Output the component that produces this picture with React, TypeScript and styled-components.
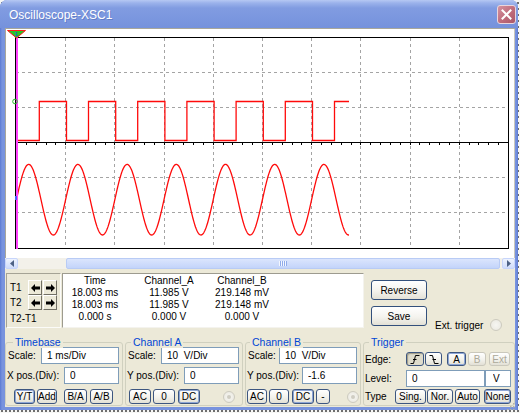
import React from "react";
import styled, { createGlobalStyle, css } from "styled-components";

const FONT = `"Liberation Sans", Arial, sans-serif`;

const Global = createGlobalStyle`
  html, body { margin: 0; padding: 0; }
  body {
    width: 520px; height: 413px; overflow: hidden;
    background-color: #f7f7f5;
    background-image: radial-gradient(circle, #6e6e6e 0.8px, transparent 1.1px);
    background-size: 4px 6px;
    font-family: ${FONT};
  }
`;

const Window = styled.div`
  position: relative;
  box-sizing: border-box;
  width: 518px;
  height: 410px;
  display: flex;
  flex-direction: column;
  background: linear-gradient(90deg, #5a79d2 0, #7893de 2px, #7893de calc(100% - 2px), #5a79d2 100%);
  border-radius: 7px 7px 0 0;
  overflow: hidden;
`;

const TitleBar = styled.div`
  height: 28px;
  flex-shrink: 0;
  display: flex;
  align-items: center;
  padding: 0 2px 0 9px;
  background: linear-gradient(180deg, #b6c8f3 0px, #9bb2eb 3px, #819ce1 8px, #7b97df 18px, #7592dc 28px);
`;

const Title = styled.span`
  flex: 1;
  color: #fff;
  font: 12px ${FONT};
  text-shadow: 1px 1px 0 rgba(40, 60, 140, 0.3);
  padding-top: 2px;
`;

const CloseBtn = styled.div`
  width: 19px;
  height: 19px;
  box-sizing: border-box;
  border: 1px solid #ead6dc;
  border-radius: 3px;
  background: linear-gradient(135deg, #d493a0, #bf6b7b 55%, #a95868);
  display: flex;
  align-items: center;
  justify-content: center;
  margin-top: 1px;
`;

const Body = styled.div`
  flex: 1;
  min-height: 0;
  margin: 0 3px 3px 5px;
  background: #ece9d8;
  display: flex;
  flex-direction: column;
`;

const ScopePanel = styled.div`
  height: 230px;
  flex-shrink: 0;
  background: #fff;
  box-shadow: inset 1px 1px 0 #a9a79b, inset -1px 0 0 #c9c7bc;
  svg { display: block; }
`;

const ScrollBar = styled.div`
  height: 11px;
  flex-shrink: 0;
  display: flex;
  background: #f3f1ea;
`;

const ScrollBtn = styled.div`
  width: 13px;
  box-sizing: border-box;
  border: 1px solid #c7d5fb;
  border-radius: 2px;
  background: linear-gradient(180deg, #eef3fe, #cfdcfb);
  display: flex;
  align-items: center;
  justify-content: center;
`;

const Track = styled.div`
  flex: 1;
  display: flex;
  padding: 0 2px 0 48px;
`;

const Thumb = styled.div`
  flex: 1;
  box-sizing: border-box;
  border: 1px solid #b8cbf5;
  border-radius: 2px;
  background: linear-gradient(180deg, #dbe5fd, #c3d4fa);
  display: flex;
  align-items: center;
  justify-content: center;
`;

const Grip = styled.div`
  width: 8px;
  height: 5px;
  background: repeating-linear-gradient(90deg, #f4f7ff 0 1px, #8fabea 1px 2px);
`;

const Controls = styled.div`
  flex: 1;
  display: flex;
  flex-direction: column;
`;

const MeasureRow = styled.div`
  display: flex;
  height: 55px;
  margin-top: 4px;
  padding-left: 1px;
`;

const CursorBox = styled.div`
  width: 55px;
  box-sizing: border-box;
  border: 1px solid;
  border-color: #a5a395 #fbfbf8 #fbfbf8 #a5a395;
  padding: 6px 0 0 3px;
  display: flex;
  flex-direction: column;
`;

const CursorRow = styled.div<{ $h: number }>`
  display: flex;
  align-items: center;
  height: ${(p) => p.$h}px;
`;

const CursorLabel = styled.span`
  width: 18px;
  font-size: 10px;
  color: #000;
  white-space: nowrap;
`;

const ArrowBtn = styled.div<{ $ml?: number }>`
  width: 14px;
  height: 15px;
  box-sizing: border-box;
  margin-left: ${(p) => p.$ml ?? 0}px;
  background: #ece9d8;
  border: 1px solid;
  border-color: #ffffff #716f64 #716f64 #ffffff;
  display: flex;
  align-items: center;
  justify-content: center;
`;

const DataBox = styled.div`
  width: 302px;
  margin-left: 1px;
  box-sizing: border-box;
  background: #fff;
  border: 1px solid;
  border-color: #9d9b8f #f4f3ee #f4f3ee #9d9b8f;
  padding-top: 1px;
  display: grid;
  grid-template-columns: 64px 84px 62px;
  grid-auto-rows: 12px;
  align-content: start;
`;

const Cell = styled.span`
  font-size: 10px;
  line-height: 12px;
  text-align: center;
  color: #000;
  white-space: nowrap;
`;

const ButtonCol = styled.div`
  width: 56px;
  margin-left: 7px;
  padding-top: 7px;
  display: flex;
  flex-direction: column;
  gap: 6px;
`;

const ActionBtn = styled.button`
  box-sizing: border-box;
  width: 56px;
  height: 20px;
  padding: 0;
  font: 10px ${FONT};
  color: #000;
  border: 1px solid #33507c;
  border-radius: 3px;
  background: linear-gradient(#ffffff, #f4f3ee 55%, #e3e1d6);
`;

const ExtTrigger = styled.div`
  margin-left: 8px;
  align-self: flex-end;
  margin-bottom: -3px;
  display: flex;
  align-items: center;
  gap: 7px;
  font-size: 10px;
  color: #000;
`;

const Radio = styled.span<{ $dot?: boolean; $ml?: number }>`
  box-sizing: border-box;
  width: 12px;
  height: 12px;
  flex-shrink: 0;
  border-radius: 50%;
  border: 1px solid #cdcbbf;
  background: radial-gradient(circle, #f6f6f2 0, #e9e7de 100%);
  margin-left: ${(p) => p.$ml ?? 0}px;
  display: flex;
  align-items: center;
  justify-content: center;
  &::after {
    content: "";
    width: 4px;
    height: 4px;
    border-radius: 50%;
    background: #cfcdc2;
    display: ${(p) => (p.$dot ? "block" : "none")};
  }
`;

const GroupsRow = styled.div`
  display: flex;
  gap: 2px;
  margin-top: 8px;
  height: 71px;
  align-items: flex-start;
`;

const Group = styled.div<{ $w?: number }>`
  position: relative;
  box-sizing: border-box;
  ${(p) => (p.$w ? css`width: ${p.$w}px;` : css`flex: 1;`)}
  height: 64px;
  margin-top: 6px;
  border: 1px solid #d0d0bf;
  border-radius: 3px;
  padding: 0 3px 0 0;
  display: flex;
  flex-direction: column;
`;

const GroupTitle = styled.span<{ $l: number }>`
  position: absolute;
  top: -7px;
  left: ${(p) => p.$l}px;
  padding: 0 2px;
  background: #ece9d8;
  color: #0046d5;
  font-size: 10.5px;
  line-height: 12px;
`;

const Row = styled.div<{ $h: number; $mt: number }>`
  display: flex;
  align-items: center;
  height: ${(p) => p.$h}px;
  margin-top: ${(p) => p.$mt}px;
`;

const Label = styled.span<{ $ml?: number; $w?: number }>`
  margin-left: ${(p) => p.$ml ?? 2}px;
  ${(p) => (p.$w ? css`width: ${p.$w}px;` : "")}
  flex-shrink: 0;
  font-size: 10px;
  color: #000;
  white-space: nowrap;
`;

const Field = styled.input<{ $w: number; $auto?: boolean; $pl?: number }>`
  box-sizing: border-box;
  width: ${(p) => p.$w}px;
  height: 17px;
  margin: 0 0 0 ${(p) => (p.$auto ? "auto" : "0")};
  padding: 0 0 0 ${(p) => p.$pl ?? 5}px;
  border: 1px solid #7f9db9;
  background: #fff;
  font: 10px ${FONT};
  color: #000;
  outline: none;
  white-space: pre;
`;

const GBtn = styled.button<{ $w: number; $ml?: number; $sel?: boolean; $dis?: boolean; $pressed?: boolean }>`
  box-sizing: border-box;
  width: ${(p) => p.$w}px;
  height: 100%;
  margin: 0 0 0 ${(p) => p.$ml ?? 0}px;
  padding: 0;
  flex-shrink: 0;
  font: 10px ${FONT};
  color: ${(p) => (p.$dis ? "#aca899" : "#000")};
  border: 1px solid ${(p) => (p.$dis ? "#cac8bc" : "#3d5680")};
  border-radius: 3px;
  background: linear-gradient(#ffffff, #f3f2ec 55%, #e2e0d5);
  display: flex;
  align-items: center;
  justify-content: center;
  ${(p) =>
    p.$sel &&
    css`
      box-shadow: inset 0 0 0 1px #8ea6d6;
    `}
  ${(p) =>
    p.$pressed &&
    css`
      background: #dedbcb;
      box-shadow: inset 1px 1px 1px #9d9987;
    `}
`;

/* ---------- icons ---------- */

const CloseIcon = () => (
  <svg width="11" height="11" viewBox="0 0 11 11">
    <path d="M1.5 1.5 L9.5 9.5 M9.5 1.5 L1.5 9.5" stroke="#fff" strokeWidth="2" strokeLinecap="square" />
  </svg>
);

const Arrow = ({ dir }: { dir: "l" | "r" }) => (
  <svg width="9" height="8" viewBox="0 0 9 8">
    <polygon
      points="0,4 4,0 4,2.5 9,2.5 9,5.5 4,5.5 4,8"
      fill="#000"
      transform={dir === "r" ? "translate(9 0) scale(-1 1)" : undefined}
    />
  </svg>
);

const ScrollArrow = ({ dir }: { dir: "l" | "r" }) => (
  <svg width="4" height="7" viewBox="0 0 4 7">
    <polygon points={dir === "l" ? "4,0 0,3.5 4,7" : "0,0 4,3.5 0,7"} fill="#4d6185" />
  </svg>
);

const EdgeIcon = ({ rising }: { rising: boolean }) => (
  <svg width="10" height="9" viewBox="0 0 10 9">
    {rising ? (
      <path d="M0.5 8.5 H3.5 L5.5 0.5 H9.5 M3 4.5 H6.5" stroke="#000" strokeWidth="1" fill="none" />
    ) : (
      <path d="M0.5 0.5 H3.5 L5.5 8.5 H9.5 M3.5 4.5 H7" stroke="#000" strokeWidth="1" fill="none" />
    )}
  </svg>
);

const Grip3 = styled.div`
  position: absolute;
  right: 3px;
  bottom: 3px;
  width: 10px;
  height: 10px;
`;

/* ---------- scope drawing ---------- */

const X0 = 16;
const DX = 49.2;

function squarePath() {
  const hi = 101.5;
  const lo = 140.5;
  let d = `M17 122 L17 ${lo}`;
  for (let k = 0; k < 7; k++) {
    const r = 39.3 + DX * k;
    d += ` L${r.toFixed(1)} ${lo} L${r.toFixed(1)} ${hi}`;
    if (k < 6) {
      const f = 66.5 + DX * k;
      d += ` L${f.toFixed(1)} ${hi} L${f.toFixed(1)} ${lo}`;
    }
  }
  d += ` L349 ${hi}`;
  return d;
}

function sinePath() {
  const pts: string[] = [];
  for (let x = 16.5; x <= 349; x += 0.5) {
    const y = 199.7 - 35.3 * Math.sin((2 * Math.PI * (x - 16.4)) / DX);
    pts.push(`${x.toFixed(1)} ${y.toFixed(2)}`);
  }
  return "M" + pts.join(" L");
}

const Scope = () => {
  const vx = Array.from({ length: 9 }, (_, i) => Math.round(X0 + DX * (i + 1)) + 0.5);
  const hy = [72.5, 107.5, 177.5, 212.5];
  const ticks = Array.from({ length: 51 }, (_, i) => Math.round(X0 + (DX / 5) * i) + 0.5);
  return (
    <svg width="510" height="230" viewBox="5 28 510 230">
      {vx.map((x) => (
        <line key={"v" + x} x1={x} y1={38} x2={x} y2={248} stroke="#a4a4a4" strokeDasharray="3 3" />
      ))}
      {hy.map((y) => (
        <line key={"h" + y} x1={16} y1={y} x2={508} y2={y} stroke="#a4a4a4" strokeDasharray="3 3" />
      ))}
      <line x1={16} y1={142.5} x2={508} y2={142.5} stroke="#000" />
      {ticks.map((x) => (
        <line key={"t" + x} x1={x} y1={143} x2={x} y2={145} stroke="#000" />
      ))}
      <rect x={15.5} y={37.5} width={493} height={211} fill="none" stroke="#000" />
      <path d={squarePath()} fill="none" stroke="#ff0a0a" strokeWidth="1.3" />
      <path d={sinePath()} fill="none" stroke="#ff0a0a" strokeWidth="1.3" />
      <rect x={16} y={30} width={2} height={219} fill="#ff40ff" />
      <circle cx={15} cy={101.5} r={2.3} fill="none" stroke="#22bb22" strokeWidth="1" />
      <rect x={15} y={196} width={2} height={4} fill="#4a5cff" />
      <polygon points="7.5,30.5 25.5,30.5 16.5,38" fill="#27c427" stroke="#ff1a1a" strokeWidth="1" />
      <text x={16.5} y={35.5} fontSize="6" textAnchor="middle" fill="#2040ff" fontFamily={FONT}>
        1
      </text>
    </svg>
  );
};

/* ---------- app ---------- */

const rows = [
  ["Time", "Channel_A", "Channel_B"],
  ["18.003 ms", "11.985 V", "219.148 mV"],
  ["18.003 ms", "11.985 V", "219.148 mV"],
  ["0.000 s", "0.000 V", "0.000 V"],
];

export default function App() {
  return (
    <>
      <Global />
      <Window>
        <TitleBar>
          <Title>Oscilloscope-XSC1</Title>
          <CloseBtn>
            <CloseIcon />
          </CloseBtn>
        </TitleBar>
        <Body>
          <ScopePanel>
            <Scope />
          </ScopePanel>
          <ScrollBar>
            <ScrollBtn>
              <ScrollArrow dir="l" />
            </ScrollBtn>
            <Track>
              <Thumb>
                <Grip />
              </Thumb>
            </Track>
            <ScrollBtn>
              <ScrollArrow dir="r" />
            </ScrollBtn>
          </ScrollBar>
          <Controls>
            <MeasureRow>
              <CursorBox>
                <CursorRow $h={15}>
                  <CursorLabel>T1</CursorLabel>
                  <ArrowBtn>
                    <Arrow dir="l" />
                  </ArrowBtn>
                  <ArrowBtn $ml={1}>
                    <Arrow dir="r" />
                  </ArrowBtn>
                </CursorRow>
                <CursorRow $h={15}>
                  <CursorLabel>T2</CursorLabel>
                  <ArrowBtn>
                    <Arrow dir="l" />
                  </ArrowBtn>
                  <ArrowBtn $ml={1}>
                    <Arrow dir="r" />
                  </ArrowBtn>
                </CursorRow>
                <CursorRow $h={17}>
                  <CursorLabel>T2-T1</CursorLabel>
                </CursorRow>
              </CursorBox>
              <DataBox>
                {rows.flat().map((t, i) => (
                  <Cell key={i}>{t}</Cell>
                ))}
              </DataBox>
              <ButtonCol>
                <ActionBtn>Reverse</ActionBtn>
                <ActionBtn>Save</ActionBtn>
              </ButtonCol>
              <ExtTrigger>
                Ext. trigger
                <Radio />
              </ExtTrigger>
            </MeasureRow>

            <GroupsRow>
              <Group $w={118}>
                <GroupTitle $l={7}>Timebase</GroupTitle>
                <Row $h={17} $mt={4}>
                  <Label>Scale:</Label>
                  <Field $w={78} $auto readOnly defaultValue="1 ms/Div" />
                </Row>
                <Row $h={17} $mt={3}>
                  <Label $ml={1}>X pos.(Div):</Label>
                  <Field $w={55} $auto readOnly defaultValue="0" />
                </Row>
                <Row $h={15} $mt={5}>
                  <GBtn $w={21} $ml={8} $sel>Y/T</GBtn>
                  <GBtn $w={20} $ml={2}>Add</GBtn>
                  <GBtn $w={23} $ml={7}>B/A</GBtn>
                  <GBtn $w={23} $ml={3}>A/B</GBtn>
                </Row>
              </Group>

              <Group $w={118}>
                <GroupTitle $l={5}>Channel A</GroupTitle>
                <Row $h={17} $mt={4}>
                  <Label>Scale:</Label>
                  <Field $w={78} $auto readOnly defaultValue="10  V/Div" />
                </Row>
                <Row $h={17} $mt={3}>
                  <Label $ml={1}>Y pos.(Div):</Label>
                  <Field $w={55} $auto readOnly defaultValue="0" />
                </Row>
                <Row $h={15} $mt={5}>
                  <GBtn $w={22} $ml={3}>AC</GBtn>
                  <GBtn $w={22} $ml={2}>0</GBtn>
                  <GBtn $w={22} $ml={3} $sel>DC</GBtn>
                  <Radio $dot $ml={23} />
                </Row>
              </Group>

              <Group $w={116}>
                <GroupTitle $l={4}>Channel B</GroupTitle>
                <Row $h={17} $mt={4}>
                  <Label>Scale:</Label>
                  <Field $w={78} $auto readOnly defaultValue="10  V/Div" />
                </Row>
                <Row $h={17} $mt={3}>
                  <Label $ml={1}>Y pos.(Div):</Label>
                  <Field $w={55} $auto readOnly defaultValue="-1.6" />
                </Row>
                <Row $h={15} $mt={5}>
                  <GBtn $w={20} $ml={1}>AC</GBtn>
                  <GBtn $w={20} $ml={2}>0</GBtn>
                  <GBtn $w={22} $ml={3} $sel>DC</GBtn>
                  <GBtn $w={14} $ml={2}>-</GBtn>
                  <Radio $dot $ml={17} />
                </Row>
              </Group>

              <Group>
                <GroupTitle $l={5}>Trigger</GroupTitle>
                <Row $h={14} $mt={9}>
                  <Label $ml={1} $w={41}>Edge:</Label>
                  <GBtn $w={18} $pressed>
                    <EdgeIcon rising />
                  </GBtn>
                  <GBtn $w={17} $ml={1}>
                    <EdgeIcon rising={false} />
                  </GBtn>
                  <GBtn $w={19} $ml={5} $sel>A</GBtn>
                  <GBtn $w={18} $ml={2} $dis>B</GBtn>
                  <GBtn $w={21} $ml={3} $dis>Ext</GBtn>
                </Row>
                <Row $h={17} $mt={4}>
                  <Label $ml={1} $w={41}>Level:</Label>
                  <Field $w={79} readOnly defaultValue="0" />
                  <Field $w={26} $pl={7} readOnly defaultValue="V" />
                </Row>
                <Row $h={15} $mt={2}>
                  <Label $ml={1} $w={30}>Type</Label>
                  <GBtn $w={31}>Sing.</GBtn>
                  <GBtn $w={26} $ml={1}>Nor.</GBtn>
                  <GBtn $w={25} $ml={2}>Auto</GBtn>
                  <GBtn $w={27} $ml={4} $sel>None</GBtn>
                </Row>
              </Group>
            </GroupsRow>
          </Controls>
        </Body>
        <Grip3>
          <svg width="10" height="10" viewBox="0 0 10 10">
            {[
              [8, 2],
              [8, 5],
              [5, 5],
              [8, 8],
              [5, 8],
              [2, 8],
            ].map(([x, y], i) => (
              <rect key={i} x={x} y={y} width={1.5} height={1.5} fill="#b5b3a6" />
            ))}
          </svg>
        </Grip3>
      </Window>
    </>
  );
}
